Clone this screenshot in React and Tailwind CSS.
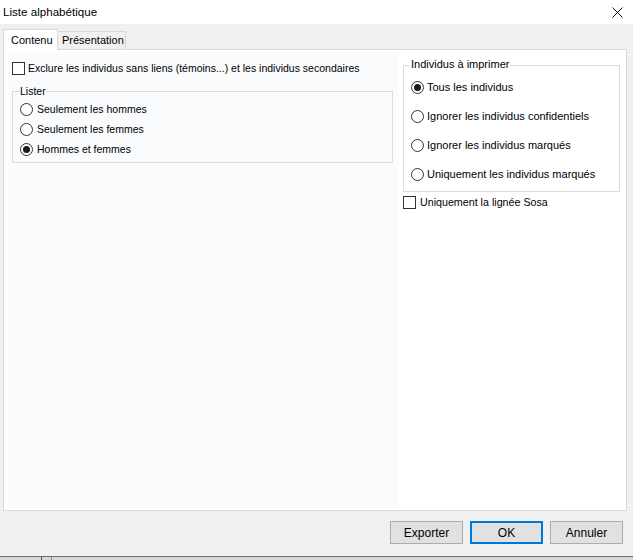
import React from "react";

const F = { fontFamily: '"Liberation Sans", Arial, sans-serif' };

function Radio({ checked }) {
  return (
    <span className="relative inline-block w-[13px] h-[13px] rounded-full border border-[#333333] bg-white shrink-0">
      {checked && (
        <span className="absolute left-[2px] top-[2px] w-[7px] h-[7px] rounded-full bg-[#1a1a1a]" />
      )}
    </span>
  );
}

function Check() {
  return <span className="inline-block w-[13px] h-[13px] border border-[#333333] bg-white shrink-0" />;
}

export default function App() {
  return (
    <div className="w-[633px] h-[560px] bg-[#f0f0f0] flex flex-col text-black overflow-hidden" style={F}>
      {/* title bar */}
      <div className="h-[24px] bg-white flex items-center justify-between pl-[3px] pr-[10px] shrink-0">
        <span className="text-[11.6px] leading-none">Liste alphabétique</span>
        <svg width="11" height="11" viewBox="0 0 11 11">
          <path d="M0.5 0.5 L10.5 10.5 M10.5 0.5 L0.5 10.5" stroke="#111" strokeWidth="1" />
        </svg>
      </div>

      {/* tabs */}
      <div className="flex items-end h-[25px] pl-[3px] shrink-0">
        <div className="h-[21px] w-[55px] bg-white border border-b-0 border-[#d9d9d9] flex items-center pl-[7px] text-[11px] relative z-10 -mb-px">
          Contenu
        </div>
        <div className="h-[18px] w-[68px] bg-[#f0f0f0] border border-l-0 border-b-0 border-[#d9d9d9] flex items-center pl-[4px] text-[11px]">
          Présentation
        </div>
      </div>

      {/* panel */}
      <div className="ml-[3px] w-[624px] h-[462px] bg-white border border-[#d9d9d9] flex shrink-0">
        <div className="w-[390px] ml-[4px] mt-[3px] mb-[3px] bg-[#fafbfd] flex flex-col text-[10.5px]">
          <div className="flex items-center mt-[9px] ml-[4px] gap-[3px] h-[13px]">
            <Check />
            <span>Exclure les individus sans liens (témoins...) et les individus secondaires</span>
          </div>
          <div className="relative ml-[4px] mt-[16px] w-[381px] h-[72px] border border-[#dcdcdc] flex flex-col pt-[11px] pl-[7px] gap-[7px]">
            <span className="absolute left-[7px] -top-[6px] bg-[#fafbfd] pr-[1px] leading-none">Lister</span>
            <div className="flex items-center gap-[4px] h-[13px]"><Radio /><span>Seulement les hommes</span></div>
            <div className="flex items-center gap-[4px] h-[13px]"><Radio /><span>Seulement les femmes</span></div>
            <div className="flex items-center gap-[4px] h-[13px]"><Radio checked /><span>Hommes et femmes</span></div>
          </div>
        </div>
        <div className="flex-1 flex flex-col pl-[5px] text-[11px]">
          <div className="relative mt-[15px] w-[217px] h-[127px] border border-[#dcdcdc] flex flex-col pt-[15px] pl-[7px] gap-[16px]">
            <span className="absolute left-[6px] -top-[7px] bg-white px-[1px] leading-none">Individus à imprimer</span>
            <div className="flex items-center gap-[3px] h-[13px]"><Radio checked /><span>Tous les individus</span></div>
            <div className="flex items-center gap-[3px] h-[13px]"><Radio /><span>Ignorer les individus confidentiels</span></div>
            <div className="flex items-center gap-[3px] h-[13px]"><Radio /><span>Ignorer les individus marqués</span></div>
            <div className="flex items-center gap-[3px] h-[13px]"><Radio /><span>Uniquement les individus marqués</span></div>
          </div>
          <div className="flex items-center gap-[4px] mt-[4px] h-[13px]">
            <Check />
            <span className="text-[10.7px]">Uniquement la lignée Sosa</span>
          </div>
        </div>
      </div>

      {/* buttons */}
      <div className="flex justify-end gap-[7px] pr-[10px] mt-[10px] shrink-0">
        <button className="w-[73px] h-[23px] bg-[#e1e1e1] border border-[#adadad] text-[12px]">Exporter</button>
        <button className="w-[73px] h-[23px] bg-[#e1e1e1] border-2 border-[#0078d7] text-[12px]">OK</button>
        <button className="w-[73px] h-[23px] bg-[#e1e1e1] border border-[#adadad] text-[12px]">Annuler</button>
      </div>

      <div className="flex-1" />
      <div className="h-[4px] border-t border-[#6f6f6f] bg-[#d6d6d6] relative shrink-0">
        <span className="absolute left-[41px] top-0 w-px h-[3px] bg-[#555]" />
        <span className="absolute left-[51px] top-0 w-px h-[3px] bg-[#888]" />
      </div>
    </div>
  );
}
